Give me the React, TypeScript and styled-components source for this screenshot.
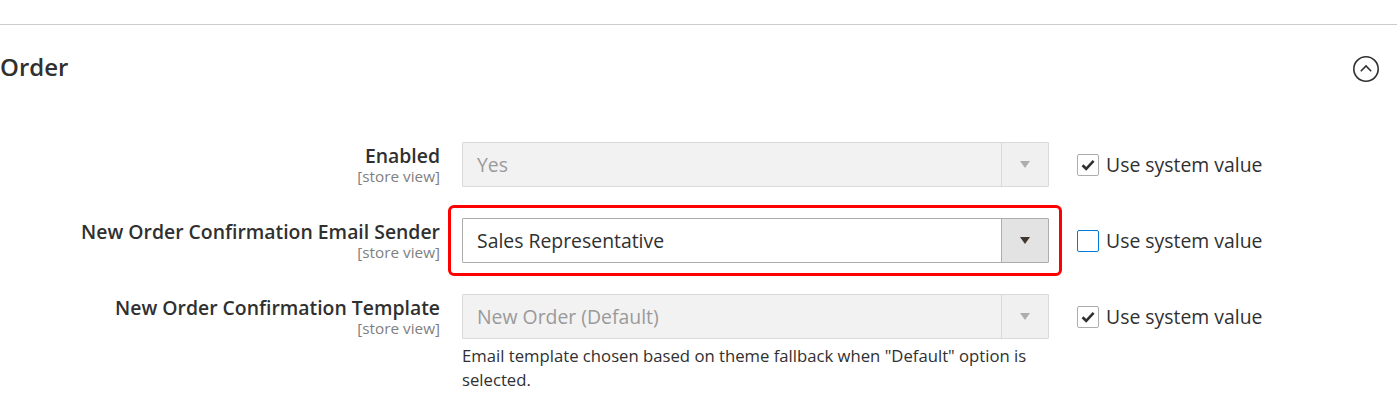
import React from "react";
import styled, { createGlobalStyle } from "styled-components";

const GlobalStyle = createGlobalStyle`
  html, body {
    margin: 0;
    padding: 0;
    background: #fff;
  }
  body {
    font-family: "Open Sans", "Liberation Sans", sans-serif;
    color: #303030;
  }
`;

const Page = styled.div`
  width: 1400px;
  padding-top: 24px;
`;

const Rule = styled.div`
  height: 1px;
  background: #cccccc;
  margin-right: 3px;
`;

const SectionHeader = styled.div`
  display: flex;
  align-items: center;
  justify-content: space-between;
  padding: 26px 20px 0 0;
  margin-bottom: 59px;
`;

const SectionTitle = styled.h2`
  margin: 0;
  font-size: 24px;
  line-height: 32px;
  font-weight: 600;
  color: #303030;
`;

const CollapseButton = styled.button`
  width: 28px;
  height: 28px;
  padding: 0;
  border: none;
  background: none;
  display: flex;
  margin-top: 3px;
`;

const Fields = styled.div`
  display: flex;
  flex-direction: column;
  gap: 31px;
`;

const FieldRow = styled.div`
  display: grid;
  grid-template-columns: 440px 587px 1fr;
  column-gap: 22px;
  align-items: start;
`;

const LabelCell = styled.div`
  text-align: right;
  padding-top: 3px;
`;

const LabelText = styled.div`
  font-size: 19.4px;
  line-height: 22px;
  font-weight: 600;
  color: #303030;
`;

const Scope = styled.div`
  font-size: 15.3px;
  line-height: 18px;
  color: #808080;
`;

const ControlCell = styled.div`
  display: flex;
  flex-direction: column;
`;

const Highlight = styled.div`
  margin: -13px -13px -13px -14px;
  padding: 10px 10px 10px 11px;
  border: 3px solid #ff0000;
  border-radius: 6px;
`;

const SelectBox = styled.div<{ $disabled?: boolean }>`
  height: 45px;
  box-sizing: border-box;
  display: flex;
  align-items: stretch;
  border: 1px solid ${(p) => (p.$disabled ? "#d9d9d9" : "#adadad")};
  background: ${(p) => (p.$disabled ? "#f2f2f2" : "#ffffff")};
  border-radius: 1px;
`;

const SelectValue = styled.div<{ $disabled?: boolean }>`
  flex: 1;
  display: flex;
  align-items: center;
  padding-left: 14px;
  font-size: 19.4px;
  color: ${(p) => (p.$disabled ? "#9a9a9a" : "#303030")};
`;

const SelectArrow = styled.div<{ $disabled?: boolean }>`
  width: 46px;
  display: flex;
  align-items: center;
  justify-content: center;
  border-left: 1px solid ${(p) => (p.$disabled ? "#d9d9d9" : "#adadad")};
  background: ${(p) => (p.$disabled ? "#f0f0f0" : "#e3e3e3")};

  &::after {
    content: "";
    border-style: solid;
    border-width: 7px 5px 0 5px;
    border-color: ${(p) => (p.$disabled ? "#adadad" : "#41362f")} transparent
      transparent transparent;
  }
`;

const Note = styled.div`
  margin-top: 5px;
  font-size: 16.7px;
  line-height: 24px;
  color: #303030;
`;

const SystemValue = styled.label`
  display: flex;
  align-items: center;
  gap: 7px;
  padding: 12px 0 0 6px;
  font-size: 19.4px;
  line-height: 22px;
  color: #303030;
`;

const CheckBox = styled.span<{ $checked?: boolean }>`
  width: 22px;
  height: 22px;
  box-sizing: border-box;
  border: 1px solid ${(p) => (p.$checked ? "#adadad" : "#007bdb")};
  border-radius: 2px;
  background: #fff;
  display: flex;
  align-items: center;
  justify-content: center;
`;

const CheckMark = () => (
  <svg width="14" height="12" viewBox="0 0 14 12">
    <path
      d="M1.5 6.2 L5.2 9.8 L12.6 1.8"
      fill="none"
      stroke="#303030"
      strokeWidth="2.6"
    />
  </svg>
);

const ChevronCircle = () => (
  <svg width="28" height="28" viewBox="0 0 28 28">
    <circle cx="14" cy="14" r="12.2" fill="none" stroke="#303030" strokeWidth="1.6" />
    <path d="M8.8 16.2 L14 11 L19.2 16.2" fill="none" stroke="#303030" strokeWidth="1.6" />
  </svg>
);

type Field = {
  label: string;
  value: string;
  disabled: boolean;
  highlight?: boolean;
  note?: string;
};

const fields: Field[] = [
  { label: "Enabled", value: "Yes", disabled: true },
  {
    label: "New Order Confirmation Email Sender",
    value: "Sales Representative",
    disabled: false,
    highlight: true,
  },
  {
    label: "New Order Confirmation Template",
    value: "New Order (Default)",
    disabled: true,
    note: 'Email template chosen based on theme fallback when "Default" option is selected.',
  },
];

const Select: React.FC<{ value: string; disabled: boolean }> = ({ value, disabled }) => (
  <SelectBox $disabled={disabled}>
    <SelectValue $disabled={disabled}>{value}</SelectValue>
    <SelectArrow $disabled={disabled} />
  </SelectBox>
);

export default function App() {
  return (
    <Page>
      <GlobalStyle />
      <Rule />
      <SectionHeader>
        <SectionTitle>Order</SectionTitle>
        <CollapseButton aria-label="Collapse">
          <ChevronCircle />
        </CollapseButton>
      </SectionHeader>
      <Fields>
        {fields.map((f) => (
          <FieldRow key={f.label}>
            <LabelCell>
              <LabelText>{f.label}</LabelText>
              <Scope>[store view]</Scope>
            </LabelCell>
            <ControlCell>
              {f.highlight ? (
                <Highlight>
                  <Select value={f.value} disabled={f.disabled} />
                </Highlight>
              ) : (
                <Select value={f.value} disabled={f.disabled} />
              )}
              {f.note && <Note>{f.note}</Note>}
            </ControlCell>
            <SystemValue>
              <CheckBox $checked={f.disabled}>{f.disabled && <CheckMark />}</CheckBox>
              Use system value
            </SystemValue>
          </FieldRow>
        ))}
      </Fields>
    </Page>
  );
}
